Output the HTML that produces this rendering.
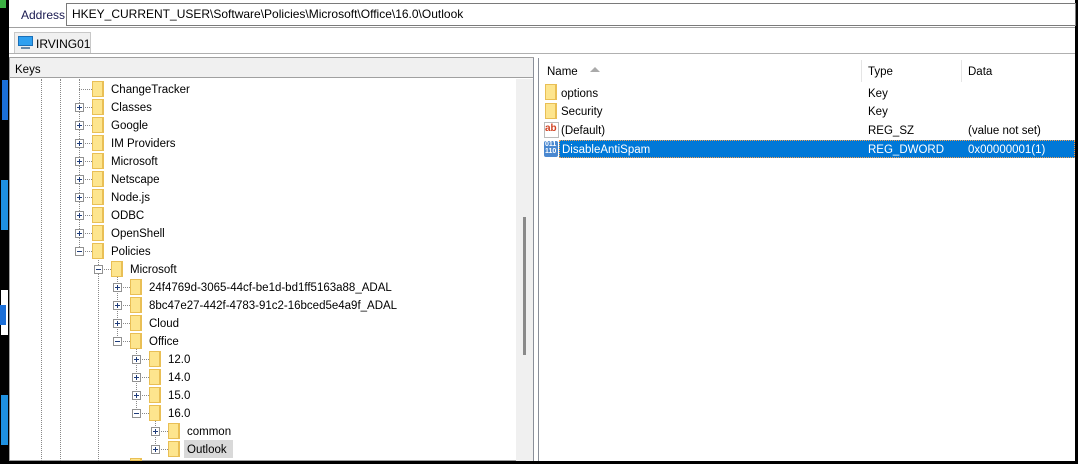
<!DOCTYPE html>
<html><head><meta charset="utf-8"><style>
*{margin:0;padding:0;box-sizing:border-box}
body{width:1078px;height:464px;overflow:hidden;background:#fff;position:relative;font-family:"Liberation Sans",sans-serif;font-size:11.5px;color:#000}
.a{position:absolute}
.fold{position:absolute;width:12px;height:16px;background:#fde58e;border:1px solid #e9bf55;border-right-width:2px}
.exp{position:absolute;width:9px;height:9px;border:1px solid #919191;background:#fff}
.exp::before{content:"";position:absolute;left:1px;top:3px;width:5px;height:1px;background:#1f3c7a}
.plus::after{content:"";position:absolute;left:3px;top:1px;width:1px;height:5px;background:#1f3c7a}
.vl{position:absolute;width:0;border-left:1px dotted #888}
.hl{position:absolute;height:0;border-top:1px dotted #888}
.t{position:absolute;white-space:nowrap;line-height:16px}
</style></head><body>
<div class="a" style="left:0;top:0;width:9px;height:464px;background:#000"></div>
<div class="a" style="left:0;top:0;width:6px;height:8px;background:#3cb043"></div>
<div class="a" style="left:2px;top:80px;width:6px;height:40px;background:#1b6fd8"></div>
<div class="a" style="left:1px;top:180px;width:7px;height:50px;background:#1e90e0"></div>
<div class="a" style="left:1px;top:290px;width:7px;height:45px;background:#fff"></div>
<div class="a" style="left:0;top:305px;width:6px;height:20px;background:#1b6fd8"></div>
<div class="a" style="left:1px;top:395px;width:7px;height:50px;background:#1e90e0"></div>
<div class="a" style="left:1075px;top:0;width:3px;height:464px;background:#000"></div>
<div class="a" style="left:0;top:461px;width:1078px;height:3px;background:#000"></div>
<div class="t" style="left:21px;top:7px;color:#1a1a50;font-size:12px">Address</div>
<div class="a" style="left:66px;top:3px;width:1010px;height:23px;border:1px solid #7a7a7a;background:#fff"></div>
<div class="t" style="left:72px;top:6px;font-size:12px">HKEY_CURRENT_USER\Software\Policies\Microsoft\Office\16.0\Outlook</div>
<div class="a" style="left:9px;top:27px;width:1066px;height:1px;background:#a0a0a0"></div>
<div class="a" style="left:14px;top:32px;width:77px;height:22px;background:#f0f0f0;border:1px solid #c8c8c8;border-bottom:none"></div>
<div class="a" style="left:18px;top:36px;width:15px;height:10px;background:#2fa0f0;border:1px solid #1a6fb8"></div>
<div class="a" style="left:21px;top:47px;width:9px;height:2px;background:#6a8aa8"></div>
<div class="t" style="left:36px;top:36px;font-size:12px">IRVING01</div>
<div class="a" style="left:9px;top:53px;width:1066px;height:1px;background:#b0b0b0"></div>
<div class="a" style="left:9px;top:54px;width:1066px;height:4px;background:#fff"></div>
<div class="a" style="left:9px;top:57px;width:525px;height:404px;border:1px solid #a0a0a0;background:#fff"></div>
<div class="a" style="left:10px;top:58px;width:523px;height:20px;background:#f0f0f0;border-bottom:1px solid #a0a0a0"></div>
<div class="t" style="left:15px;top:62px">Keys</div>
<div class="a" style="left:516px;top:79px;width:17px;height:382px;background:#f0f0f0"></div>
<div class="a" style="left:523px;top:217px;width:3px;height:138px;background:#8a8a8a"></div>
<div class="a" style="left:533px;top:58px;width:1px;height:403px;background:#8a8f99"></div>
<div class="a" style="left:538px;top:58px;width:1px;height:403px;background:#8a8f99"></div>
<div class="vl" style="left:41px;top:79px;height:382px"></div>
<div class="vl" style="left:60px;top:79px;height:382px"></div>
<div class="vl" style="left:79px;top:79px;height:172px"></div>
<div class="vl" style="left:98px;top:256px;height:205px"></div>
<div class="vl" style="left:117px;top:274px;height:68px"></div>
<div class="vl" style="left:136px;top:346px;height:68px"></div>
<div class="vl" style="left:155px;top:418px;height:32px"></div>
<div id="tree"></div>
<div class="a" style="left:539px;top:58px;width:536px;height:403px;background:#fff"></div>
<div class="t" style="left:547px;top:64px">Name</div>
<div class="a" style="left:590px;top:67px;width:0;height:0;border-left:5px solid transparent;border-right:5px solid transparent;border-bottom:5px solid #aaa"></div>
<div class="a" style="left:861px;top:60px;width:1px;height:22px;background:#e5e5e5"></div>
<div class="t" style="left:868px;top:64px">Type</div>
<div class="a" style="left:961px;top:60px;width:1px;height:22px;background:#e5e5e5"></div>
<div class="t" style="left:968px;top:64px">Data</div>
<div class="fold" style="left:545px;top:84px"></div><div class="t" style="left:561px;top:86px">options</div><div class="t" style="left:868px;top:86px">Key</div>
<div class="fold" style="left:545px;top:103px"></div><div class="t" style="left:561px;top:104px">Security</div><div class="t" style="left:868px;top:104px">Key</div>
<div class="a" style="left:544px;top:122px;width:15px;height:16px;background:#fff;border:1px solid #bbb"></div>
<div class="t" style="left:545px;top:121px;color:#d04020;font-weight:bold;font-size:10px">ab</div>
<div class="t" style="left:561px;top:123px">(Default)</div><div class="t" style="left:868px;top:123px">REG_SZ</div><div class="t" style="left:968px;top:123px">(value not set)</div>
<div class="a" style="left:559px;top:140px;width:516px;height:18px;background:#0078d7;border:1px dotted #f5a050"></div>
<div class="a" style="left:544px;top:141px;width:14px;height:16px;background:#4a88d0;border-radius:2px"></div>
<div class="t" style="left:545px;top:141px;color:#fff;font-size:7px;line-height:7px;font-weight:bold">011<br>110</div>
<div class="t" style="left:562px;top:142px;color:#fff">DisableAntiSpam</div><div class="t" style="left:868px;top:142px;color:#fff">REG_DWORD</div><div class="t" style="left:968px;top:142px;color:#fff">0x00000001(1)</div>
<script>
var rows=[["ChangeTracker",1,0],["Classes",1,1],["Google",1,1],["IM Providers",1,1],["Microsoft",1,1],["Netscape",1,1],["Node.js",1,1],["ODBC",1,1],["OpenShell",1,1],["Policies",1,2],["Microsoft",2,2],["24f4769d-3065-44cf-be1d-bd1ff5163a88_ADAL",3,1],["8bc47e27-442f-4783-91c2-16bced5e4a9f_ADAL",3,1],["Cloud",3,1],["Office",3,2],["12.0",4,1],["14.0",4,1],["15.0",4,1],["16.0",4,2],["common",5,1],["Outlook",5,1]];
var h="";
rows.forEach(function(r,i){var c=89+18*i,L=r[1],ex=79+19*(L-1),ic=92+19*(L-1),tx=111+19*(L-1);
h+='<div class="hl" style="left:'+ex+'px;top:'+c+'px;width:'+(ic-ex)+'px"></div>';
if(r[2])h+='<div class="exp'+(r[2]==1?' plus':'')+'" style="left:'+(ex-4)+'px;top:'+(c-4)+'px"></div>';
h+='<div class="fold" style="left:'+ic+'px;top:'+(c-8)+'px"></div>';
if(i==20)h+='<div class="a" style="left:'+(tx-3)+'px;top:'+(c-9)+'px;width:49px;height:18px;background:#d9d9d9"></div>';
h+='<div class="t" style="left:'+tx+'px;top:'+(c-7)+'px">'+r[0]+'</div>';});
h+='<div class="fold" style="left:130px;top:458px;height:3px"></div>';
document.getElementById("tree").innerHTML=h;
</script>
</body></html>
